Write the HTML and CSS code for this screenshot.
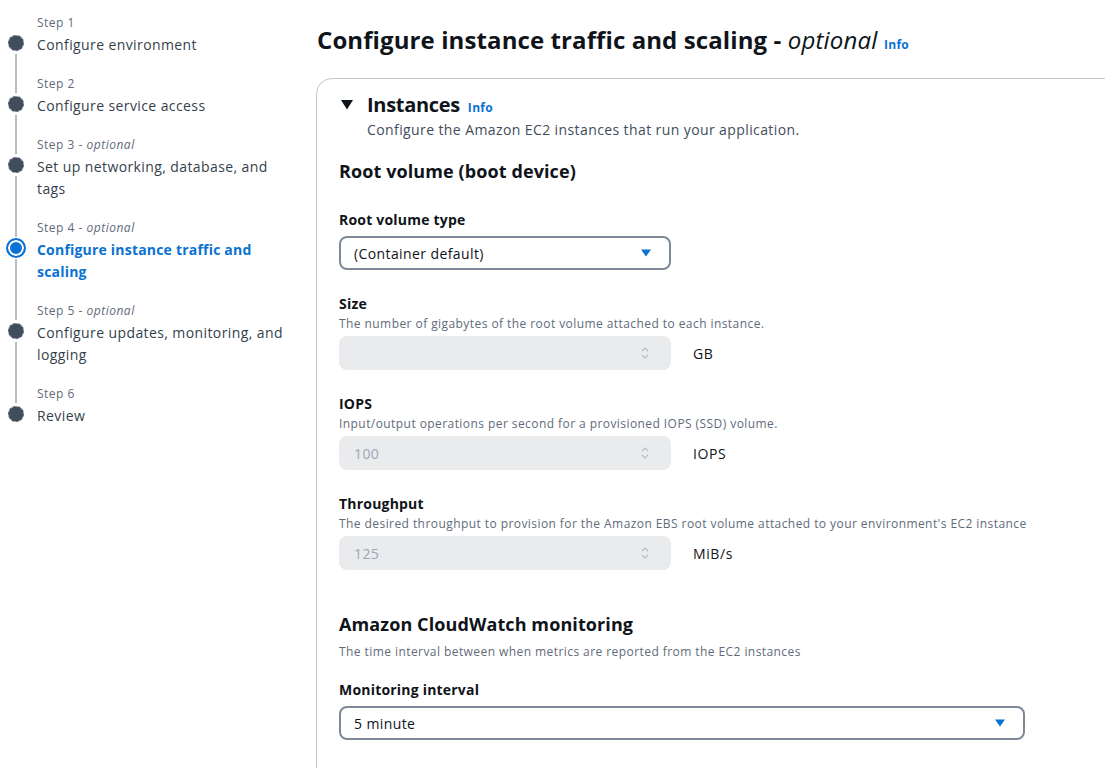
FILE: index.html
```html
<!DOCTYPE html>
<html lang="en">
<head>
<meta charset="utf-8">
<title>Configure instance traffic and scaling</title>
<link rel="stylesheet" href="styles.css">
</head>
<body>
<div class="layout">
  <nav class="steps">
    <div class="step first">
      <div class="rail"><span class="seg top"></span><span class="dot"></span><span class="seg bottom"></span></div>
      <div class="step-text">
        <div class="step-label">Step 1</div>
        <div class="step-title">Configure environment</div>
      </div>
    </div>
    <div class="step">
      <div class="rail"><span class="seg top"></span><span class="dot"></span><span class="seg bottom"></span></div>
      <div class="step-text">
        <div class="step-label">Step 2</div>
        <div class="step-title">Configure service access</div>
      </div>
    </div>
    <div class="step">
      <div class="rail"><span class="seg top"></span><span class="dot"></span><span class="seg bottom"></span></div>
      <div class="step-text">
        <div class="step-label">Step 3 - <i>optional</i></div>
        <div class="step-title">Set up networking, database, and tags</div>
      </div>
    </div>
    <div class="step active">
      <div class="rail"><span class="seg top"></span><span class="dot"></span><span class="seg bottom"></span></div>
      <div class="step-text">
        <div class="step-label">Step 4 - <i>optional</i></div>
        <div class="step-title">Configure instance traffic and scaling</div>
      </div>
    </div>
    <div class="step">
      <div class="rail"><span class="seg top"></span><span class="dot"></span><span class="seg bottom"></span></div>
      <div class="step-text">
        <div class="step-label">Step 5 - <i>optional</i></div>
        <div class="step-title">Configure updates, monitoring, and logging</div>
      </div>
    </div>
    <div class="step last">
      <div class="rail"><span class="seg top"></span><span class="dot"></span><span class="seg bottom"></span></div>
      <div class="step-text">
        <div class="step-label">Step 6</div>
        <div class="step-title">Review</div>
      </div>
    </div>
  </nav>

  <main class="main">
    <h1 class="page-title">Configure instance traffic and scaling - <i>optional</i> <a class="info" href="#">Info</a></h1>

    <section class="card">
      <div class="card-head">
        <span class="caret-wrap"><svg class="caret" width="14" height="12" viewBox="0 0 14 12"><path d="M1 1h12L7 10.5z" fill="#0f141a"/></svg></span>
        <div>
          <h2 class="card-title">Instances <a class="info" href="#">Info</a></h2>
          <p class="card-desc">Configure the Amazon EC2 instances that run your application.</p>
        </div>
      </div>

      <div class="card-body">
        <h3 class="sub-title">Root volume (boot device)</h3>

        <div class="field field-first">
          <div class="label">Root volume type</div>
          <div class="select narrow">
            <span>(Container default)</span>
            <svg width="12" height="8" viewBox="0 0 12 8"><path d="M1 0.5h10L6 7.5z" fill="#0972d3"/></svg>
          </div>
        </div>

        <div class="field">
          <div class="label">Size</div>
          <div class="desc">The number of gigabytes of the root volume attached to each instance.</div>
          <div class="input-row">
            <div class="input narrow">
              <span class="value"></span>
              <svg class="spin" width="10" height="14" viewBox="0 0 10 14"><path d="M2 5L5 2l3 3M2 9l3 3 3-3" fill="none" stroke="#b4bcc6" stroke-width="1.2"/></svg>
            </div>
            <span class="unit">GB</span>
          </div>
        </div>

        <div class="field">
          <div class="label">IOPS</div>
          <div class="desc">Input/output operations per second for a provisioned IOPS (SSD) volume.</div>
          <div class="input-row">
            <div class="input narrow">
              <span class="value">100</span>
              <svg class="spin" width="10" height="14" viewBox="0 0 10 14"><path d="M2 5L5 2l3 3M2 9l3 3 3-3" fill="none" stroke="#b4bcc6" stroke-width="1.2"/></svg>
            </div>
            <span class="unit">IOPS</span>
          </div>
        </div>

        <div class="field">
          <div class="label">Throughput</div>
          <div class="desc">The desired throughput to provision for the Amazon EBS root volume attached to your environment's EC2 instance</div>
          <div class="input-row">
            <div class="input narrow">
              <span class="value">125</span>
              <svg class="spin" width="10" height="14" viewBox="0 0 10 14"><path d="M2 5L5 2l3 3M2 9l3 3 3-3" fill="none" stroke="#b4bcc6" stroke-width="1.2"/></svg>
            </div>
            <span class="unit">MiB/s</span>
          </div>
        </div>

        <h3 class="sub-title cw">Amazon CloudWatch monitoring</h3>
        <p class="cw-desc">The time interval between when metrics are reported from the EC2 instances</p>

        <div class="field field-cw">
          <div class="label">Monitoring interval</div>
          <div class="select wide">
            <span>5 minute</span>
            <svg width="12" height="8" viewBox="0 0 12 8"><path d="M1 0.5h10L6 7.5z" fill="#0972d3"/></svg>
          </div>
        </div>
      </div>
    </section>
  </main>
</div>
</body>
</html>
```

FILE: styles.css
```css
* { box-sizing: border-box; }

html, body {
  margin: 0;
  height: 100%;
  background: #ffffff;
}

body {
  font-family: "Open Sans", "Noto Sans", "Liberation Sans", sans-serif;
  color: #0f141a;
  letter-spacing: 0.4px;
  overflow: hidden;
}

.layout {
  display: flex;
  height: 768px;
  overflow: hidden;
}

/* ---------- Steps nav ---------- */
.steps {
  flex: 0 0 316px;
  padding: 15px 0 0 6px;
  display: flex;
  flex-direction: column;
}

.step {
  display: flex;
  gap: 11px;
}

.rail {
  flex: 0 0 20px;
  display: flex;
  flex-direction: column;
  align-items: center;
}

.seg {
  width: 2px;
  background: #b4bcc6;
}

.seg.top {
  height: 17px;
  margin-bottom: 3px;
}

.seg.bottom {
  flex: 1;
  margin-top: 3px;
}

.step.first .seg.top,
.step.last .seg.bottom {
  visibility: hidden;
}

.dot {
  width: 16px;
  height: 16px;
  border-radius: 50%;
  background: #414d5c;
  border: 1px dashed #8a94a3;
  flex: 0 0 auto;
}

.step.active .dot {
  width: 20px;
  height: 20px;
  margin: -2px 0;
  background: #0972d3;
  border: 2px solid #0972d3;
  box-shadow: inset 0 0 0 2px #ffffff;
}

.step-text {
  flex: 1;
  padding-bottom: 20px;
  padding-right: 26px;
}

.step.last .step-text { padding-bottom: 0; }

.step-label {
  font-size: 12px;
  line-height: 16px;
  color: #5f6b7a;
  margin-bottom: 3px;
  letter-spacing: 0.5px;
}

.step-label i { font-style: italic; }

.step-title {
  font-size: 14px;
  line-height: 22px;
  color: #353f4c;
}

.step.active .step-title {
  color: #0972d3;
  font-weight: 700;
  letter-spacing: 0.2px;
}

/* ---------- Main ---------- */
.main {
  flex: 1;
  min-width: 0;
  padding-top: 25px;
}

.page-title {
  margin: 0 0 18px 1px;
  font-size: 24px;
  line-height: 30px;
  font-weight: 700;
  letter-spacing: 0.1px;
  white-space: nowrap;
}

.page-title i {
  font-weight: 400;
  letter-spacing: 0.2px;
}

.info {
  color: #0972d3;
  font-size: 12px;
  font-weight: 700;
  text-decoration: none;
  letter-spacing: 0.3px;
  margin-left: 0;
}

.card {
  width: 860px;
  border: 1px solid #c6c6cd;
  border-radius: 16px;
  padding: 14px 0 60px 22px;
  min-height: 720px;
}

.card-head {
  display: flex;
}

.caret-wrap {
  flex: 0 0 28px;
  padding-top: 6px;
}

.caret { display: block; margin-left: 1px; }

.card-title {
  margin: 0;
  font-size: 20px;
  line-height: 24px;
  font-weight: 700;
  letter-spacing: -0.3px;
}

.card-title .info { margin-left: 3px; }

.card-desc {
  margin: 0;
  font-size: 14px;
  line-height: 20px;
  color: #414d5c;
}

.card-body {
  padding-top: 20px;
}

.sub-title {
  margin: 0;
  font-size: 18px;
  line-height: 22px;
  font-weight: 700;
  letter-spacing: 0.1px;
}

.field { margin-top: 24px; }
.field-first { margin-top: 28px; }

.label {
  font-size: 14px;
  line-height: 20px;
  font-weight: 700;
  letter-spacing: 0.2px;
}

.desc {
  font-size: 12px;
  line-height: 16px;
  color: #5f6b7a;
  margin-top: 2px;
  letter-spacing: 0.43px;
}

.select,
.input {
  height: 34px;
  border-radius: 8px;
  display: flex;
  align-items: center;
  justify-content: space-between;
  font-size: 14px;
}

.select {
  margin-top: 6px;
  border: 2px solid #7d8998;
  padding: 0 17px 0 13px;
  color: #0f141a;
}

.narrow { width: 332px; }
.wide { width: 686px; }

.input-row {
  display: flex;
  align-items: center;
  gap: 22px;
  margin-top: 4px;
}

.input {
  background: #e9ebed;
  padding: 0 21px 0 15px;
  color: #9ba7b6;
}

.spin { display: block; }

.unit {
  font-size: 14px;
  color: #0f141a;
  letter-spacing: 0.6px;
}

.sub-title.cw { margin-top: 43px; }

.cw-desc {
  margin: 9px 0 0;
  font-size: 12px;
  line-height: 16px;
  color: #5f6b7a;
  letter-spacing: 0.43px;
}

.field-cw { margin-top: 20px; }
```
